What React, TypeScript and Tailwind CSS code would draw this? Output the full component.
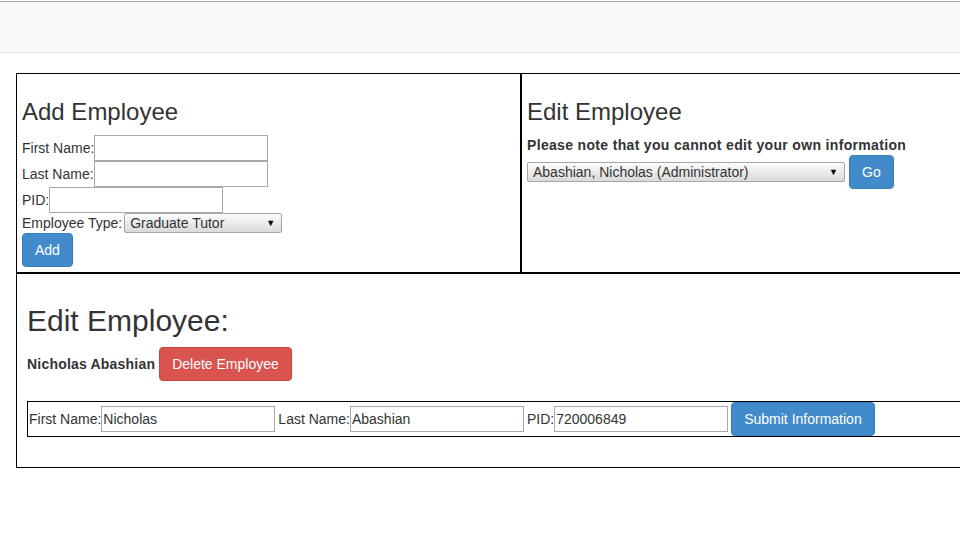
import React from "react";

function TextInput({ value, w = "w-[174px]", h = "h-[26px]" }: { value?: string; w?: string; h?: string }) {
    return (
        <input
            readOnly
            defaultValue={value}
            className={`${w} ${h} border border-[#a9a9a9] bg-white px-[1px] text-[14px] text-[#333] outline-none`}
        />
    );
}

function FakeSelect({ value, w }: { value: string; w: string }) {
    return (
        <div className={`${w} h-[20px] flex items-center justify-between border border-[#a6a6a6] rounded-[2px] bg-gradient-to-b from-[#fcfcfc] to-[#dadada] pl-[5px] pr-[6px] text-[14px] text-[#333]`}>
            <span>{value}</span>
            <span className="text-[9px] text-black">▼</span>
        </div>
    );
}

function Btn({ children, color = "blue" }: { children: React.ReactNode; color?: "blue" | "red" }) {
    const cls =
        color === "red"
            ? "bg-[#d9534f] border-[#d43f3a]"
            : "bg-[#428bca] border-[#357ebd]";
    return (
        <button className={`h-[34px] px-3 border rounded-[4px] text-white text-[14px] leading-[20px] shrink-0 ${cls}`}>
            {children}
        </button>
    );
}

export default function App() {
    return (
        <div className="w-full h-[539px] overflow-hidden bg-white text-[#333] font-['Liberation_Sans',Arial,sans-serif] text-[14px]">
            <div className="mt-px h-[52px] border-t border-b border-t-[#a9a9a9] border-b-[#e7e7e7] bg-[#f8f8f8]" />
            <div className="mt-5 ml-4 w-[1100px] border border-black">
                <div className="flex border-b-2 border-black">
                    <div className="w-[505px] p-[5px] border-r-2 border-black">
                        <h3 className="mt-5 mb-[10px] text-[24px] leading-[1.1]">Add Employee</h3>
                        <div className="flex items-center h-[26px]">
                            <span>First Name:</span>
                            <TextInput />
                        </div>
                        <div className="flex items-center h-[26px]">
                            <span>Last Name:</span>
                            <TextInput />
                        </div>
                        <div className="flex items-center h-[26px]">
                            <span>PID:</span>
                            <TextInput />
                        </div>
                        <div className="flex items-center h-[20px]">
                            <span className="mr-[2px]">Employee Type:</span>
                            <FakeSelect value="Graduate Tutor" w="w-[158px]" />
                        </div>
                        <Btn>Add</Btn>
                    </div>
                    <div className="flex-1 p-[5px]">
                        <h3 className="mt-5 mb-[10px] text-[24px] leading-[1.1]">Edit Employee</h3>
                        <p className="font-bold leading-[20px] tracking-[0.33px]">Please note that you cannot edit your own information</p>
                        <div className="flex items-center gap-1">
                            <FakeSelect value="Abashian, Nicholas (Administrator)" w="w-[318px]" />
                            <Btn>Go</Btn>
                        </div>
                    </div>
                </div>
                <div className="p-[10px]">
                    <h2 className="mt-5 mb-[10px] text-[30px] leading-[1.1]">Edit Employee:</h2>
                    <div className="flex items-center gap-1">
                        <span className="font-bold tracking-[0.2px]">Nicholas Abashian</span>
                        <Btn color="red">Delete Employee</Btn>
                    </div>
                    <div className="mt-5 mb-5 border border-black flex items-center h-[36px]">
                        <span className="ml-px">First Name:</span>
                        <TextInput value="Nicholas" />
                        <span className="ml-[3px]">Last Name:</span>
                        <TextInput value="Abashian" />
                        <span className="ml-[3px]">PID:</span>
                        <TextInput value="720006849" />
                        <div className="ml-[3px]">
                            <Btn>Submit Information</Btn>
                        </div>
                    </div>
                </div>
            </div>
        </div>
    );
}
